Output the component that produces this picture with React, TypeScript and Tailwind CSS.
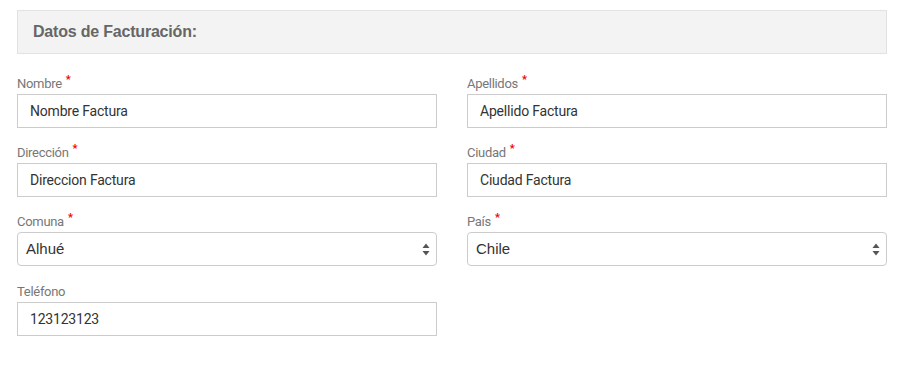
function Field({
  label,
  required,
  className,
  children,
}: {
  label: string;
  required?: boolean;
  className?: string;
  children: React.ReactNode;
}) {
  return (
    <div className={"flex flex-col " + (className ?? "")}>
      <label className="h-[17px] text-[13px] leading-[16px] text-[#777] tracking-[-0.3px] mb-[1px] font-['Roboto',sans-serif]">
        {label}
        {required && (
          <span className="relative -top-[5px] ml-[4px] text-[11px] text-[#e00] font-bold">*</span>
        )}
      </label>
      {children}
    </div>
  );
}

function TextInput({ value }: { value: string }) {
  return (
    <div className="h-[34px] border border-[#ccc] bg-white flex items-center pl-[12px] text-[14px] text-[#333] tracking-[-0.2px] font-['Roboto',sans-serif]">
      {value}
    </div>
  );
}

function SelectBox({ value }: { value: string }) {
  return (
    <div className="h-[34px] border border-[#ccc] rounded-[4px] bg-white flex items-center justify-between pl-[8px] pr-[6px] text-[15px] text-[#333] font-['Liberation_Sans',Arial,sans-serif]">
      <span>{value}</span>
      <svg width="8" height="13" viewBox="0 0 8 13" fill="#555">
        <path d="M4 0.5 L7.5 5 L0.5 5 Z" />
        <path d="M4 12.5 L7.5 8 L0.5 8 Z" />
      </svg>
    </div>
  );
}

export default function App() {
  return (
    <div className="w-[914px] h-[378px] bg-white pt-[10px] pl-[17px] font-['Roboto',sans-serif]">
      <div className="w-[870px]">
        <div className="h-[44px] bg-[#f3f3f3] border border-[#e2e2e2] flex items-center pl-[15px]">
          <h2 className="text-[16px] font-bold text-[#666] tracking-[-0.2px] font-['Liberation_Sans',Arial,sans-serif]">
            Datos de Facturación:
          </h2>
        </div>
        <div className="grid grid-cols-2 gap-x-[30px] gap-y-[17px] mt-[22px]">
          <Field label="Nombre" required>
            <TextInput value="Nombre Factura" />
          </Field>
          <Field label="Apellidos" required>
            <TextInput value="Apellido Factura" />
          </Field>
          <Field label="Dirección" required>
            <TextInput value="Direccion Factura" />
          </Field>
          <Field label="Ciudad" required>
            <TextInput value="Ciudad Factura" />
          </Field>
          <Field label="Comuna" required>
            <SelectBox value="Alhué" />
          </Field>
          <Field label="País" required>
            <SelectBox value="Chile" />
          </Field>
          <Field label="Teléfono" className="mt-[1px]">
            <TextInput value="123123123" />
          </Field>
        </div>
      </div>
    </div>
  );
}
